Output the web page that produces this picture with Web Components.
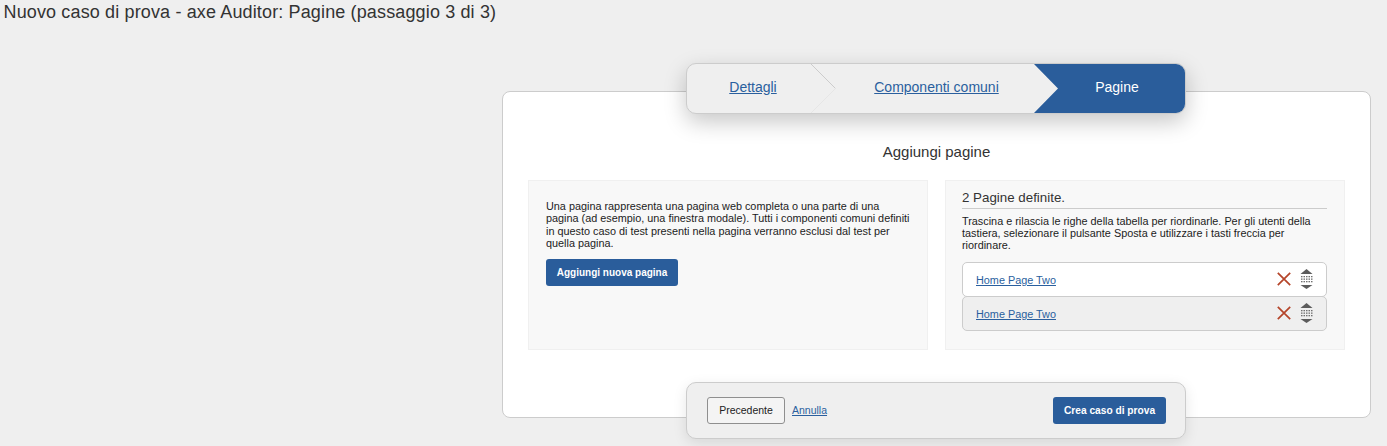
<!DOCTYPE html>
<html lang="it">
<head>
<meta charset="utf-8">
<title>Nuovo caso di prova</title>
<style>
  html, body { margin: 0; height: 446px; overflow: hidden; }
  body { background: #efefef; font-family: "Liberation Sans", Arial, sans-serif; color: #222; }
</style>
</head>
<body>
<wizard-page>
  <span slot="title">Nuovo caso di prova - axe Auditor: Pagine (passaggio 3 di 3)</span>
  <wizard-steps slot="steps"></wizard-steps>
  <span slot="heading">Aggiungi pagine</span>
  <add-page-panel slot="left"></add-page-panel>
  <pages-panel slot="right">
    <page-row>Home Page Two</page-row>
    <page-row alt>Home Page Two</page-row>
  </pages-panel>
  <wizard-footer slot="footer"></wizard-footer>
</wizard-page>

<script>
class WizardPage extends HTMLElement {
  constructor() {
    super();
    this.attachShadow({ mode: 'open' });
    this.shadowRoot.innerHTML = `
      <style>
        :host { display: block; }
        h1 { margin: 0; padding: 2px 0 0 3.500px; height: 91px; box-sizing: border-box; font-size: 18px; letter-spacing: 0.14px; line-height: 20px; font-weight: 400; color: #333; }
        .card {
          position: relative;
          box-sizing: border-box;
          width: 869px;
          height: 327px;
          margin-left: 502px;
          padding: 51px 25px 0;
          background: #fff;
          border: 1px solid #ccc;
          border-radius: 8px;
        }
        h2 { margin: 0 0 20px; text-align: center; font-size: 15px; line-height: 17px; font-weight: 400; color: #333; }
        .cols { display: grid; grid-template-columns: 400px 400px; column-gap: 17px; }
        /* stepper and footer sit over the card edges */
        .steps { position: absolute; left: 183px; top: -29px; }
        .footer { position: absolute; left: 183px; top: 290px; }
      </style>
      <h1><slot name="title"></slot></h1>
      <div class="card">
        <div class="steps"><slot name="steps"></slot></div>
        <h2><slot name="heading"></slot></h2>
        <div class="cols">
          <slot name="left"></slot>
          <slot name="right"></slot>
        </div>
        <div class="footer"><slot name="footer"></slot></div>
      </div>
    `;
  }
}
customElements.define('wizard-page', WizardPage);

class WizardSteps extends HTMLElement {
  constructor() {
    super();
    this.attachShadow({ mode: 'open' });
    this.shadowRoot.innerHTML = `
      <style>
        :host {
          display: block;
          width: 500px;
          height: 51px;
          box-sizing: border-box;
          border: 1px solid #ccc;
          border-radius: 10px;
          background: #efefef;
          box-shadow: 0 8px 22px rgba(0, 0, 0, 0.22);
          overflow: hidden;
          font-size: 14px;
        }
        .row { display: grid; grid-template-columns: 124px 223px 1fr; height: 49px; position: relative; }
        .step { display: flex; align-items: center; justify-content: center; padding-bottom: 3px; box-sizing: border-box; }
        a { color: #2a5f9e; text-decoration: underline; }
        .current { color: #fff; background: #2a5d9b; padding-left: 15px; clip-path: polygon(0 0, 100% 0, 100% 100%, 0 100%, 24px 50%); }
        .first { padding-left: 8px; }
        .second { padding-left: 28px; }
        svg { position: absolute; left: 124px; top: 0; }
      </style>
      <div class="row">
        <div class="step first"><a href="#">Dettagli</a></div>
        <div class="step second"><a href="#">Componenti comuni</a></div>
        <div class="step current">Pagine</div>
        <svg width="26" height="49" viewBox="0 0 26 49" fill="none">
          <path d="M0 0 L24.500 24.500" stroke="#ccc" stroke-width="1"/>
          <path d="M24.500 24.500 L0 49" stroke="#e6e6e6" stroke-width="1"/>
        </svg>
      </div>
    `;
  }
}
customElements.define('wizard-steps', WizardSteps);

class AddPagePanel extends HTMLElement {
  constructor() {
    super();
    this.attachShadow({ mode: 'open' });
    this.shadowRoot.innerHTML = `
      <style>
        :host {
          display: block;
          box-sizing: border-box;
          height: 170px;
          padding: 19px 17px 0;
          background: #f8f8f8;
          border: 1px solid #f0f0f0;
          font-size: 10.850px;
          line-height: 12.400px;
          color: #1c1c1c;
        }
        p { margin: 0 0 9px; }
        button {
          display: block;
          width: 132px;
          height: 27px;
          padding: 0;
          border: 0;
          border-radius: 3px;
          background: #2a5d9b;
          color: #fff;
          font: 700 10px "Liberation Sans", Arial, sans-serif;
        }
      </style>
      <p>Una pagina rappresenta una pagina web completa o una parte di una pagina (ad esempio, una finestra modale). Tutti i componenti comuni definiti in questo caso di test presenti nella pagina verranno esclusi dal test per quella pagina.</p>
      <button type="button">Aggiungi nuova pagina</button>
    `;
  }
}
customElements.define('add-page-panel', AddPagePanel);

class PagesPanel extends HTMLElement {
  constructor() {
    super();
    this.attachShadow({ mode: 'open' });
    this.shadowRoot.innerHTML = `
      <style>
        :host {
          display: block;
          box-sizing: border-box;
          height: 170px;
          padding: 9px 17px 0 16px;
          background: #f8f8f8;
          border: 1px solid #f0f0f0;
        }
        h3 { margin: 0; padding-bottom: 2px; font-size: 13.330px; line-height: 16px; font-weight: 400; color: #333; border-bottom: 1px solid #ccc; }
        p { margin: 6px 0 11px; font-size: 10.850px; line-height: 12px; color: #1c1c1c; }
        .rows { display: flex; flex-direction: column; }
      </style>
      <h3>2 Pagine definite.</h3>
      <p>Trascina e rilascia le righe della tabella per riordinarle. Per gli utenti della tastiera, selezionare il pulsante Sposta e utilizzare i tasti freccia per riordinare.</p>
      <div class="rows"><slot></slot></div>
    `;
  }
}
customElements.define('pages-panel', PagesPanel);

class PageRow extends HTMLElement {
  constructor() {
    super();
    this.attachShadow({ mode: 'open' });
    this.shadowRoot.innerHTML = `
      <style>
        :host {
          display: flex;
          align-items: center;
          box-sizing: border-box;
          height: 35px;
          padding: 0 13px;
          background: #fff;
          border: 1px solid #ccc;
          border-radius: 5px;
          font-size: 10.850px;
        }
        :host([alt]) { background: #efefef; margin-top: -1px; }
        a { flex: 1; color: #2a5f9e; text-decoration: underline; }
        .icons { display: flex; align-items: center; gap: 9px; padding-bottom: 2px; }
        svg { display: block; }
      </style>
      <a href="#"><slot></slot></a>
      <div class="icons">
        <svg width="14" height="14" viewBox="0 0 14 14" fill="none">
          <path d="M0.800 0.800 L13.200 13.200 M13.200 0.800 L0.800 13.200" stroke="#b5452a" stroke-width="1.700"/>
        </svg>
        <svg width="13" height="20" viewBox="0 0 13 20" fill="#5c5c5c">
          <path d="M6.500 0 L12.500 5 H0.500 Z"/>
          <path d="M0.500 16 H12.500 L6.500 20 Z"/>
          <g fill="#707070">
            <rect x="1" y="7" width="1.500" height="1.300"/><rect x="3.500" y="7" width="1.500" height="1.300"/><rect x="6" y="7" width="1.500" height="1.300"/><rect x="8.500" y="7" width="1.500" height="1.300"/><rect x="11" y="7" width="1.500" height="1.300"/>
            <rect x="1" y="9.500" width="1.500" height="1.300"/><rect x="3.500" y="9.500" width="1.500" height="1.300"/><rect x="6" y="9.500" width="1.500" height="1.300"/><rect x="8.500" y="9.500" width="1.500" height="1.300"/><rect x="11" y="9.500" width="1.500" height="1.300"/>
            <rect x="1" y="12" width="1.500" height="1.300"/><rect x="3.500" y="12" width="1.500" height="1.300"/><rect x="6" y="12" width="1.500" height="1.300"/><rect x="8.500" y="12" width="1.500" height="1.300"/><rect x="11" y="12" width="1.500" height="1.300"/>
          </g>
        </svg>
      </div>
    `;
  }
}
customElements.define('page-row', PageRow);

class WizardFooter extends HTMLElement {
  constructor() {
    super();
    this.attachShadow({ mode: 'open' });
    this.shadowRoot.innerHTML = `
      <style>
        :host {
          display: flex;
          align-items: center;
          box-sizing: border-box;
          width: 500px;
          height: 57px;
          padding: 0 19px 0 20px;
          background: #efefef;
          border: 1px solid #ccc;
          border-radius: 10px;
          box-shadow: 0 4px 14px rgba(0, 0, 0, 0.1);
          font-size: 10.500px;
        }
        button { height: 27px; margin-bottom: 1px; padding: 0; border-radius: 3px; font: 400 10.500px "Liberation Sans", Arial, sans-serif; }
        .prev { width: 78px; background: #f4f4f4; border: 1px solid #8f8f8f; color: #222; }
        a { margin-left: 7px; margin-bottom: 1px; color: #2a5f9e; text-decoration: underline; }
        .create { margin-left: auto; width: 113px; border: 0; background: #2a5d9b; color: #fff; font-weight: 700; font-size: 10.200px; }
      </style>
      <button class="prev" type="button">Precedente</button>
      <a href="#">Annulla</a>
      <button class="create" type="button">Crea caso di prova</button>
    `;
  }
}
customElements.define('wizard-footer', WizardFooter);
</script>
</body>
</html>
